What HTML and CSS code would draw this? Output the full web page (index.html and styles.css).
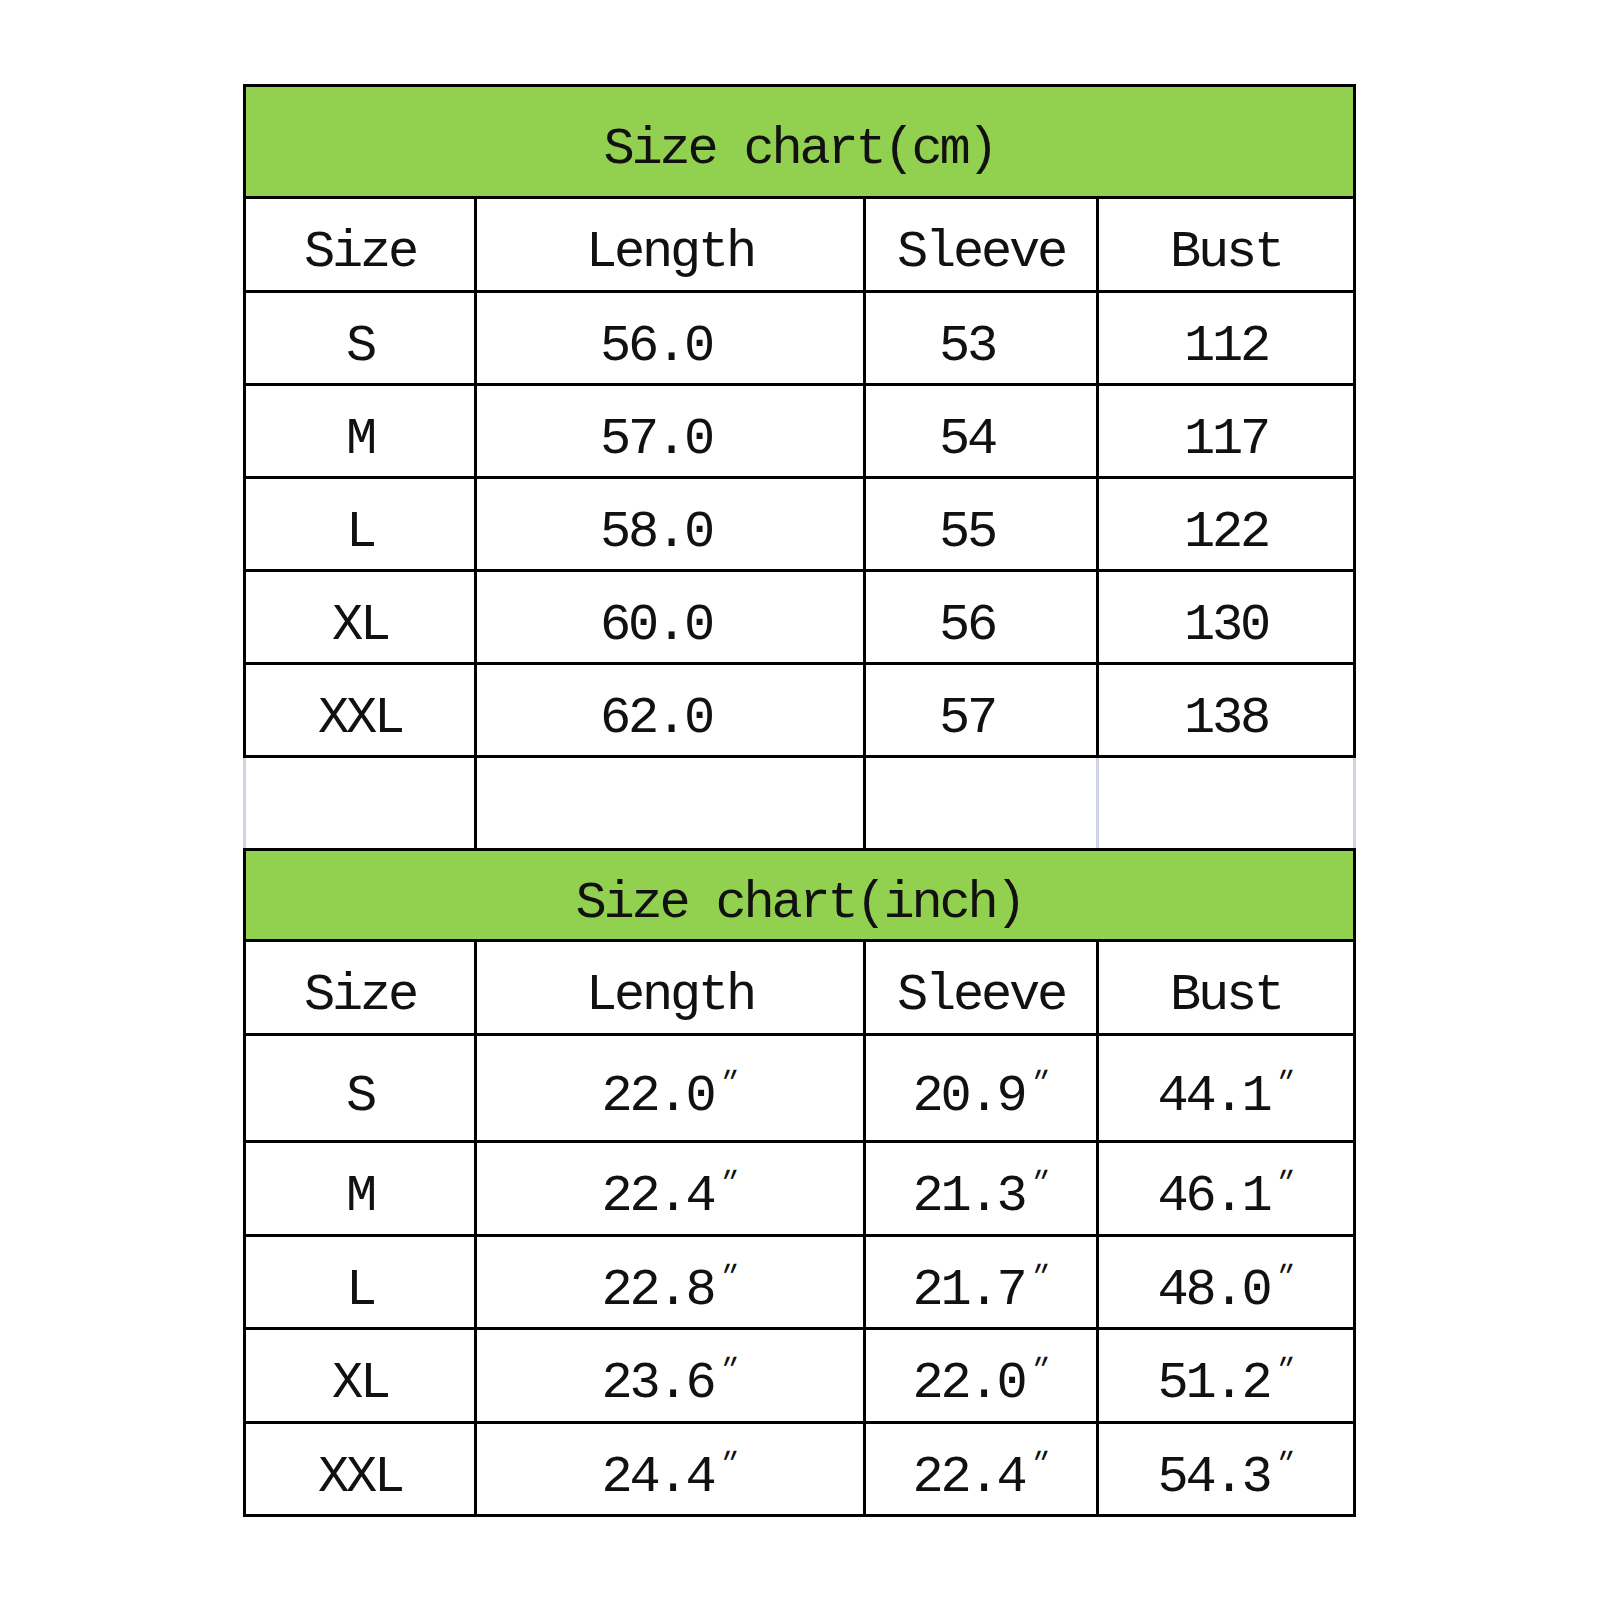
FILE: index.html
```html
<!DOCTYPE html>
<html>
<head>
<meta charset="utf-8">
<link rel="stylesheet" href="styles.css">
</head>
<body>
<table class="chart">
  <colgroup>
    <col class="c-size"><col class="c-length"><col class="c-sleeve"><col class="c-bust">
  </colgroup>
  <tbody>
    <tr class="title title-cm"><td colspan="4">Size chart(cm)</td></tr>
    <tr class="head"><td>Size</td><td>Length</td><td>Sleeve</td><td>Bust</td></tr>
    <tr><td>S</td><td class="pad">56.0</td><td class="pad">53</td><td>112</td></tr>
    <tr><td>M</td><td class="pad">57.0</td><td class="pad">54</td><td>117</td></tr>
    <tr><td>L</td><td class="pad">58.0</td><td class="pad">55</td><td>122</td></tr>
    <tr><td>XL</td><td class="pad">60.0</td><td class="pad">56</td><td>130</td></tr>
    <tr><td>XXL</td><td class="pad">62.0</td><td class="pad">57</td><td>138</td></tr>
    <tr class="blank"><td class="faint-l"></td><td></td><td class="faint-r"></td><td class="faint-r"></td></tr>
    <tr class="title title-inch"><td colspan="4">Size chart(inch)</td></tr>
    <tr class="head"><td>Size</td><td>Length</td><td>Sleeve</td><td>Bust</td></tr>
    <tr class="tall"><td>S</td><td>22.0<span class="in">″</span></td><td>20.9<span class="in">″</span></td><td>44.1<span class="in">″</span></td></tr>
    <tr class="head"><td>M</td><td>22.4<span class="in">″</span></td><td>21.3<span class="in">″</span></td><td>46.1<span class="in">″</span></td></tr>
    <tr><td>L</td><td>22.8<span class="in">″</span></td><td>21.7<span class="in">″</span></td><td>48.0<span class="in">″</span></td></tr>
    <tr class="head"><td>XL</td><td>23.6<span class="in">″</span></td><td>22.0<span class="in">″</span></td><td>51.2<span class="in">″</span></td></tr>
    <tr><td>XXL</td><td>24.4<span class="in">″</span></td><td>22.4<span class="in">″</span></td><td>54.3<span class="in">″</span></td></tr>
  </tbody>
</table>
</body>
</html>
```

FILE: styles.css
```css
html, body {
  margin: 0;
  padding: 0;
  background: #ffffff;
}

.chart {
  margin: 84px 0 0 243px;
  border-collapse: collapse;
  table-layout: fixed;
  width: 1113px;
  font-family: "Liberation Mono", "Courier New", monospace;
  font-size: 52px;
  letter-spacing: -3.2px;
  color: #111;
}

.c-size { width: 231px; }
.c-length { width: 389px; }
.c-sleeve { width: 233px; }
.c-bust { width: 257px; }

.chart td {
  border: 3px solid #000;
  padding: 17px 0 0 0;
  text-align: center;
  vertical-align: middle;
  line-height: 1;
  white-space: nowrap;
}

.chart tr { height: 93px; }
.chart tr.head { height: 94px; }
.chart tr.tall { height: 107px; }
.chart tr.title-cm { height: 112px; }
.chart tr.title-inch { height: 91px; }

.chart tr.title td {
  background: #92d050;
}

.chart td.pad { padding-right: 28px; }

.chart tr.blank td.faint-l { border-left-color: #cbd3e5; }
.chart tr.blank td.faint-r { border-right-color: #cbd3e5; }

.in {
  display: inline-block;
  font-family: "Noto Sans CJK SC", "DejaVu Sans", sans-serif;
  font-size: 34px;
  font-style: italic;
  letter-spacing: 0;
  line-height: 0;
  margin-left: 3px;
  vertical-align: 14px;
  width: 22px;
  text-align: left;
}
```
